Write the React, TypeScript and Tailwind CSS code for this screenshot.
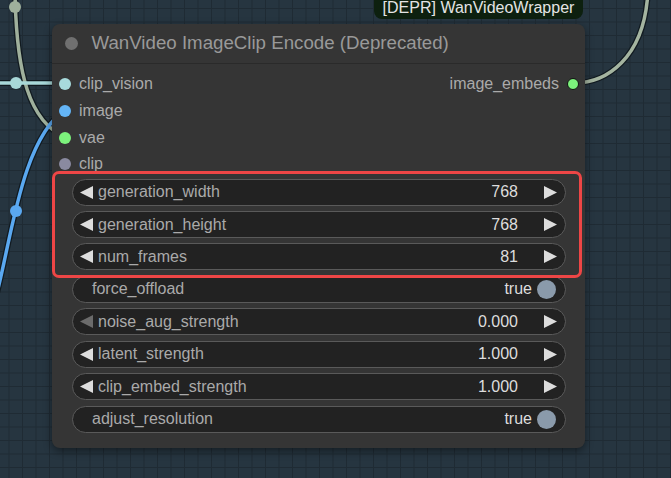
import type { ReactNode } from "react"

const font = { fontFamily: '"Liberation Sans", Arial, sans-serif' }

function Tri({ dir, dim }: { dir: "l" | "r"; dim?: boolean }) {
  return (
    <svg width="13" height="13" viewBox="0 0 13 13" className="shrink-0">
      <polygon
        points={dir === "l" ? "13,0 13,13 0,6.5" : "0,0 0,13 13,6.5"}
        fill={dim ? "#6b6b6b" : "#dddddd"}
      />
    </svg>
  )
}

function Slot({ color, label }: { color: string; label: string }) {
  return (
    <div className="flex h-[26.67px] items-center">
      <span className={`ml-[7px] h-[12px] w-[12px] rounded-full ${color}`} />
      <span className="ml-[8px] text-[16px] text-[#aaaaaa]">{label}</span>
    </div>
  )
}

function NumberWidget({ label, value, dimLeft }: { label: string; value: string; dimLeft?: boolean }) {
  return (
    <div className="flex h-[27px] items-center rounded-full border border-[#5a5a5a] bg-[#222] pl-[7px] pr-[8px]">
      <Tri dir="l" dim={dimLeft} />
      <span className="ml-[5px] text-[16px] text-[#aaaaaa]">{label}</span>
      <span className="ml-auto mr-[26px] text-[16px] text-[#dddddd]">{value}</span>
      <Tri dir="r" />
    </div>
  )
}

function ToggleWidget({ label }: { label: string }) {
  return (
    <div className="flex h-[27px] items-center rounded-full border border-[#5a5a5a] bg-[#222] pl-[19px] pr-[9.5px]">
      <span className="text-[16px] text-[#aaaaaa]">{label}</span>
      <span className="ml-auto mr-[4.5px] text-[16px] text-[#dddddd]">true</span>
      <span className="h-[19px] w-[19px] rounded-full bg-[#8a9aab]" />
    </div>
  )
}

function Canvas({ children }: { children: ReactNode }) {
  return (
    <div
      className="relative h-[478px] w-[671px] overflow-hidden bg-[#263540] bg-[image:linear-gradient(to_right,#1f2b34_1px,transparent_1px),linear-gradient(to_bottom,#1f2b34_1px,transparent_1px)] bg-[size:13.5px_13.5px] bg-[position:8.5px_8px]"
      style={font}
    >
      {children}
    </div>
  )
}

export default function App() {
  const wires = [
    { d: "M 15 -10 C 16 75, 30 122, 65 137", c: "#9fb09c" },
    { d: "M -10 83 L 65 83", c: "#a8d8d8" },
    { d: "M -5 300 C 10 250, 20 140, 65 110", c: "#5aa8f0" },
    { d: "M 574 83 C 605 83, 645 60, 648 -10", c: "#a4b4a0" },
  ]
  return (
    <Canvas>
      <svg width="671" height="478" className="absolute left-0 top-0">
        {wires.map((w, i) => (
          <path key={"o" + i} d={w.d} fill="none" stroke="#111a20" strokeWidth="6" />
        ))}
        {wires.map((w, i) => (
          <path key={"i" + i} d={w.d} fill="none" stroke={w.c} strokeWidth="3.5" />
        ))}
        <circle cx="15" cy="7" r="6" fill="#9fb09c" />
        <circle cx="16" cy="83" r="6" fill="#a8d8d8" />
        <circle cx="16" cy="211" r="6" fill="#5aa8f0" />
      </svg>

      {/* badge */}
      <div className="absolute left-[374px] top-[-5px] flex h-[24px] w-[209px] items-center justify-center rounded-b-[8px] bg-[#0d200f] pt-[1px] text-[16px] text-[#e4e4e4]">
        [DEPR] WanVideoWrapper
      </div>

      {/* node */}
      <div className="absolute left-[52px] top-[24px] flex h-[424px] w-[533px] flex-col rounded-[8px] bg-[#353535] shadow-[0_3px_8px_rgba(0,0,0,0.45)]">
        <div className="flex h-[40px] shrink-0 items-center border-b border-[#2a2a2a]">
          <span className="ml-[12.5px] h-[13px] w-[13px] rounded-full bg-[#707070]" />
          <span className="ml-[14px] text-[18.7px] text-[#999999]">WanVideo ImageClip Encode (Deprecated)</span>
        </div>
        <div className="relative pt-[7px]">
          <Slot color="bg-[#a8dadc]" label="clip_vision" />
          <Slot color="bg-[#64b5f6]" label="image" />
          <Slot color="bg-[#7cf27c]" label="vae" />
          <Slot color="bg-[#8a8aa0]" label="clip" />
          <div className="absolute right-[6px] top-[7px] flex h-[26.67px] items-center">
            <span className="text-[16px] text-[#aaaaaa]">image_embeds</span>
            <span className="ml-[8px] h-[12px] w-[12px] rounded-full border border-[#111] bg-[#7cf27c]" />
          </div>
        </div>
        <div className="ml-[20px] mr-[19px] mt-[1px] flex flex-col gap-[5.43px]">
          <NumberWidget label="generation_width" value="768" />
          <NumberWidget label="generation_height" value="768" />
          <NumberWidget label="num_frames" value="81" />
          <ToggleWidget label="force_offload" />
          <NumberWidget label="noise_aug_strength" value="0.000" dimLeft />
          <NumberWidget label="latent_strength" value="1.000" />
          <NumberWidget label="clip_embed_strength" value="1.000" />
          <ToggleWidget label="adjust_resolution" />
        </div>

        {/* highlight */}
        <div className="pointer-events-none absolute left-0 top-[147px] h-[107px] w-[530px] rounded-[7px] border-[3px] border-[#ee4646]" />
      </div>
    </Canvas>
  )
}
